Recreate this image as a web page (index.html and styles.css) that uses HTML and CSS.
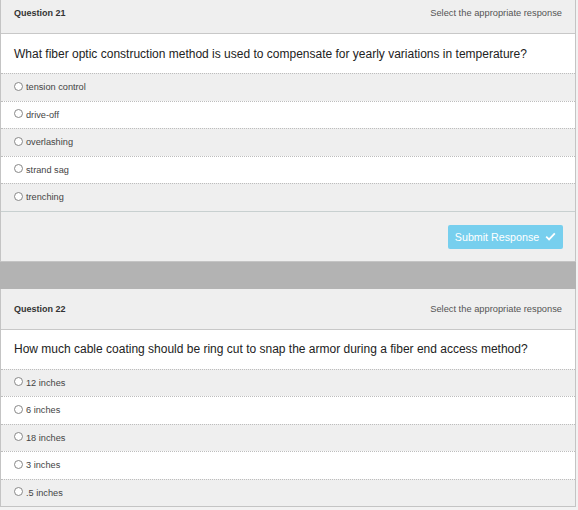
FILE: index.html
```html
<!DOCTYPE html>
<html>
<head>
<meta charset="utf-8">
<link rel="stylesheet" href="styles.css">
</head>
<body>
<div class="page">
  <div class="card first">
    <div class="card-head">
      <span class="q-num">Question 21</span>
      <span class="q-hint">Select the appropriate response</span>
    </div>
    <div class="q-text">What fiber optic construction method is used to compensate for yearly variations in temperature?</div>
    <ul class="options">
      <li class="opt"><span class="radio"></span>tension control</li>
      <li class="opt"><span class="radio"></span>drive-off</li>
      <li class="opt"><span class="radio"></span>overlashing</li>
      <li class="opt"><span class="radio"></span>strand sag</li>
      <li class="opt"><span class="radio"></span>trenching</li>
    </ul>
    <div class="card-foot">
      <button class="submit">Submit Response
        <svg class="check" viewBox="0 0 12 10" width="11" height="9"><polyline points="1.2,5.2 4.4,8.2 10.8,1.6" fill="none" stroke="#fff" stroke-width="2"/></svg>
      </button>
    </div>
  </div>
  <div class="divider"></div>
  <div class="card">
    <div class="card-head">
      <span class="q-num">Question 22</span>
      <span class="q-hint">Select the appropriate response</span>
    </div>
    <div class="q-text">How much cable coating should be ring cut to snap the armor during a fiber end access method?</div>
    <ul class="options">
      <li class="opt"><span class="radio"></span>12 inches</li>
      <li class="opt"><span class="radio"></span>6 inches</li>
      <li class="opt"><span class="radio"></span>18 inches</li>
      <li class="opt"><span class="radio"></span>3 inches</li>
      <li class="opt"><span class="radio"></span>.5 inches</li>
    </ul>
  </div>
</div>
</body>
</html>
```
FILE: styles.css
```css
html, body {
  margin: 0;
  padding: 0;
  background: #f2f2f2;
  font-family: "Liberation Sans", Arial, sans-serif;
  color: #333;
}
.page {
  width: 576px;
  overflow: hidden;
}
.card {
  background: #fff;
  border-left: 1px solid #c4c4c4;
  border-right: 1px solid #c4c4c4;
  border-bottom: 1px solid #c4c4c4;
}
.card.first {
  margin-top: -7px;
}
.card-head {
  height: 41px;
  background: #efefef;
  border-bottom: 1px solid #c8c8c8;
  display: flex;
  align-items: center;
  justify-content: space-between;
  padding: 0 13px;
  box-sizing: border-box;
}
.q-num {
  font-size: 9px;
  font-weight: bold;
  color: #333;
}
.q-hint {
  font-size: 9.3px;
  color: #555;
}
.q-text {
  height: 39px;
  display: flex;
  align-items: center;
  padding: 0 13px;
  font-size: 12px;
  color: #222;
  background: #fff;
}
.options {
  list-style: none;
  margin: 0;
  padding: 0;
}
.opt {
  height: 26.5px;
  border-top: 1px dotted #bdbdbd;
  display: flex;
  align-items: center;
  padding: 0 13px;
  font-size: 9.2px;
  color: #444;
}
.opt:nth-child(odd) {
  background: #efefef;
}
.opt:nth-child(even) {
  background: #fff;
}
.radio {
  width: 7px;
  height: 7px;
  border: 0.7px solid #888;
  border-radius: 50%;
  margin-right: 3px;
  margin-top: -2px;
  background: #fff;
  flex: none;
}
.card-foot {
  background: #efefef;
  border-top: 1px solid #c8d0d0;
  height: 50px;
  box-sizing: border-box;
  display: flex;
  justify-content: flex-end;
  align-items: flex-start;
  padding: 13px 12px 0 14px;
}
.submit {
  background: #77cfee;
  border: none;
  border-radius: 2px;
  color: #fff;
  font-family: "Liberation Sans", Arial, sans-serif;
  font-size: 10.7px;
  height: 24px;
  width: 115px;
  padding: 0;
  display: flex;
  align-items: center;
  justify-content: center;
  gap: 6px;
}
.check {
  display: block;
}
.divider {
  height: 27px;
  background: #b3b3b3;
}
```
